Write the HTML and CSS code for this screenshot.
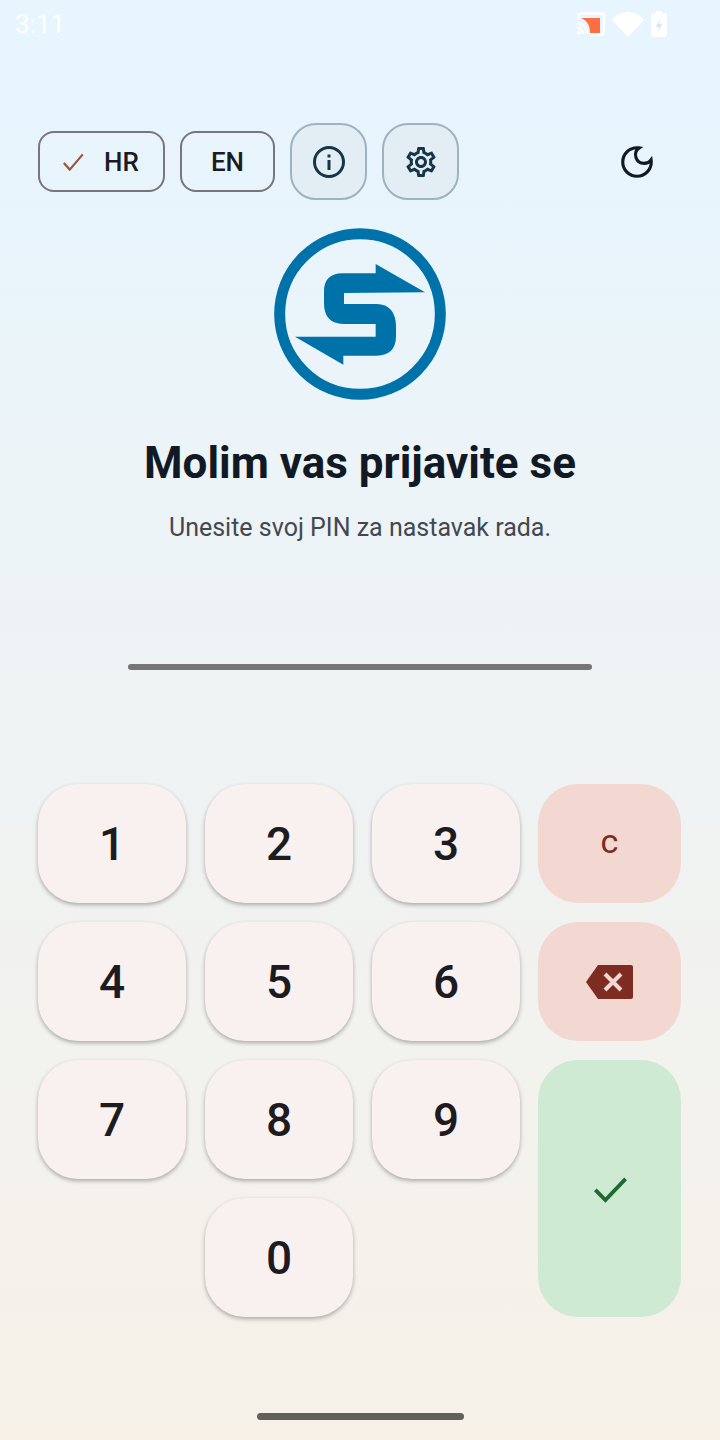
FILE: index.html
```html
<!DOCTYPE html>
<html lang="hr">
<head>
<meta charset="UTF-8" />
<meta name="viewport" content="width=device-width, initial-scale=1" />
<title>Prijava</title>
<link rel="stylesheet" href="styles.css">
</head>
<body>

<div class="statusbar">
  <span class="clock">3:11</span>
  <div class="statusicons">
    <svg width="29" height="24" viewBox="0 0 29 24">
      <path d="M3 7V3a1.500 1.500 0 0 1 1.500-1.500h22A1.500 1.500 0 0 1 28 3v18a1.500 1.500 0 0 1-1.500 1.500H15" fill="none" stroke="#fff" stroke-width="2.600"/>
      <path d="M5 6h19v15H14C14 13 11 8.500 5 6z" fill="#ff6e40"/>
      <path d="M1 11c6 0 10 5 10 11M1 15.500c3.500 0 6 3 6 6.500" fill="none" stroke="#fff" stroke-width="2.400"/>
      <circle cx="2.800" cy="20.500" r="2" fill="#fff"/>
    </svg>
    <svg width="32" height="25" viewBox="0 0 32 25"><path d="M0 8C4 3 10 0 16 0s12 3 16 8L16 25z" fill="#fff"/></svg>
    <svg width="16" height="26" viewBox="0 0 16 26">
      <path d="M5 0h6v2h3a2 2 0 0 1 2 2v20a2 2 0 0 1-2 2H2a2 2 0 0 1-2-2V4a2 2 0 0 1 2-2h3z" fill="#fff"/>
      <path d="M9 8l-4 8h3l-1 5 4-8H8z" fill="#cfe6f5"/>
    </svg>
  </div>
</div>

<div class="toolbar">
  <button class="chip chipHr">
    <svg width="26" height="26" viewBox="0 0 24 24"><path d="M3.500 13l5.500 6L21 5" fill="none" stroke="#9c5138" stroke-width="2"/></svg>
    HR
  </button>
  <button class="chip chipEn">EN</button>
  <button class="iconbtn">
    <svg width="34" height="34" viewBox="0 0 34 34">
      <circle cx="17" cy="17" r="14.500" fill="none" stroke="#153549" stroke-width="3"/>
      <rect x="15.500" y="15" width="3" height="10" fill="#153549"/>
      <rect x="15.500" y="9.500" width="3" height="3" fill="#153549"/>
    </svg>
  </button>
  <button class="iconbtn">
    <svg width="36" height="36" viewBox="0 0 24 24">
      <path d="M19.430 12.980c.04-.32.070-.64.070-.98s-.030-.66-.070-.98l2.110-1.650c.19-.15.240-.42.120-.64l-2-3.460c-.12-.22-.39-.3-.61-.22l-2.490 1c-.52-.4-1.080-.73-1.690-.98l-.38-2.650A.488.488 0 0 0 14 2h-4c-.25 0-.46.18-.49.42l-.38 2.650c-.61.25-1.170.59-1.690.98l-2.490-1c-.23-.09-.49 0-.61.22l-2 3.460c-.13.22-.07.49.12.64l2.110 1.650c-.04.32-.07.65-.07.98s.030.66.070.98l-2.110 1.650c-.19.15-.24.42-.12.64l2 3.460c.12.22.39.3.61.22l2.490-1c.52.4 1.080.73 1.690.98l.38 2.650c.03.24.24.42.49.42h4c.25 0 .46-.18.49-.42l.38-2.650c.61-.25 1.170-.59 1.690-.98l2.490 1c.23.09.49 0 .61-.22l2-3.460c.12-.22.070-.49-.12-.64l-2.110-1.650zM17.450 11.270c.04.31.050.52.050.73s-.020.43-.050.73l-.14 1.130.89.7 1.080.84-.7 1.210-1.270-.51-1.040-.42-.9.68c-.43.32-.84.56-1.250.73l-1.060.43-.16 1.130-.2 1.350h-1.400l-.19-1.350-.16-1.130-1.060-.43c-.43-.18-.83-.41-1.230-.71l-.91-.7-1.060.43-1.270.51-.7-1.210 1.080-.84.89-.7-.14-1.130c-.03-.31-.05-.54-.05-.74s.020-.43.050-.73l.14-1.130-.89-.7-1.080-.84.7-1.210 1.270.51 1.040.42.9-.68c.43-.32.84-.56 1.250-.73l1.060-.43.16-1.130.2-1.350h1.390l.19 1.350.16 1.130 1.060.43c.43.18.83.41 1.230.71l.91.7 1.060-.43 1.270-.51.7 1.210-1.070.85-.89.7.140 1.130zM12 8c-2.210 0-4 1.790-4 4s1.790 4 4 4 4-1.790 4-4-1.790-4-4-4zm0 6c-1.100 0-2-.9-2-2s.9-2 2-2 2 .9 2 2-.9 2-2 2z" fill="#153549"/>
    </svg>
  </button>
  <button class="moon">
    <svg width="38" height="38" viewBox="0 0 24 24">
      <path d="M12 3a9 9 0 1 0 9 9c0-.46-.04-.92-.1-1.360a5.390 5.390 0 0 1-4.400 2.260 5.400 5.400 0 0 1-3.140-9.800c-.44-.06-.9-.1-1.360-.1z" fill="none" stroke="#111a24" stroke-width="2"/>
    </svg>
  </button>
</div>

<div class="header">
  <svg class="logo" width="172" height="172" viewBox="42 22 516 516">
    <circle cx="300" cy="280" r="241" fill="none" stroke="#0072aa" stroke-width="33"/>
    <path d="M495 215 347 130v28H248C210 158 192 178 192 212v36c0 40 20 62 58 62h97v38H105l145 84v-27h100c38 0 58-20 58-58v-32c0-38-20-65-58-65h-98v-33z" fill="#0072aa"/>
  </svg>
  <h1>Molim vas prijavite se</h1>
  <p>Unesite svoj PIN za nastavak rada.</p>
</div>

<div class="pinline"></div>

<div class="keypad">
  <button class="key">1</button>
  <button class="key">2</button>
  <button class="key">3</button>
  <button class="side red clear">c</button>
  <button class="key">4</button>
  <button class="key">5</button>
  <button class="key">6</button>
  <button class="side red">
    <svg width="47" height="36" viewBox="0 0 47 36">
      <path d="M12 1h33a2 2 0 0 1 2 2v30a2 2 0 0 1-2 2H12L0 18z" fill="#7e2b22"/>
      <path d="M19 10l16 16M35 10L19 26" stroke="#f3d8d2" stroke-width="4"/>
    </svg>
  </button>
  <button class="key">7</button>
  <button class="key">8</button>
  <button class="key">9</button>
  <button class="side green">
    <svg width="44" height="44" viewBox="0 0 24 24"><path d="M4 12.500l5.500 5.500L20.500 6.500" fill="none" stroke="#1e6b2d" stroke-width="2.100"/></svg>
  </button>
  <button class="key zero">0</button>
</div>

<div class="homepill"></div>

</body>
</html>
```

FILE: styles.css
```css
* {
  box-sizing: border-box;
}
body {
  margin: 0;
  width: 720px;
  height: 1440px;
  overflow: hidden;
  display: flex;
  flex-direction: column;
  font-family: Roboto, sans-serif;
  background: linear-gradient(180deg, #e6f5ff 0%, #f7f1e8 100%);
  color: #1c1b1f;
}
button {
  font-family: inherit;
  cursor: pointer;
  padding: 0;
}

.statusbar {
  height: 48px;
  padding: 0 53px 0 15px;
  display: flex;
  justify-content: space-between;
  align-items: center;
}
.clock {
  color: #fff;
  font-size: 26px;
}
.statusicons {
  display: flex;
  align-items: center;
  gap: 7px;
}

.toolbar {
  margin-top: 75px;
  padding: 0 38px;
  height: 77px;
  display: flex;
  align-items: center;
}
.chip {
  height: 61px;
  background: transparent;
  border: 2px solid #79747e;
  border-radius: 16px;
  font-size: 26px;
  font-weight: 500;
  color: #1c1b1f;
  display: flex;
  align-items: center;
  justify-content: center;
}
.chipHr {
  width: 127px;
  gap: 18px;
  padding-right: 4px;
}
.chipEn {
  width: 95px;
  margin-left: 15px;
}
.iconbtn {
  width: 77px;
  height: 77px;
  margin-left: 15px;
  background: #e3eef4;
  border: 2px solid #9db3c2;
  border-radius: 26px;
  display: flex;
  align-items: center;
  justify-content: center;
}
.moon {
  margin-left: auto;
  margin-right: 26px;
  background: none;
  border: none;
  display: flex;
}

.header {
  margin-top: 28px;
  display: flex;
  flex-direction: column;
  align-items: center;
}
.logo {
  display: block;
}
.header h1 {
  margin: 34px 0 0;
  font-size: 44px;
  line-height: 58px;
  font-weight: 700;
  color: #111a24;
}
.header p {
  margin: 21px 0 0;
  font-size: 25px;
  line-height: 30px;
  color: #44474e;
}

.pinline {
  width: 464px;
  height: 6px;
  margin: 121px auto 0;
  border-radius: 3px;
  background: #787579;
}

.keypad {
  margin-top: 114px;
  padding: 0 38px;
  display: grid;
  grid-template-columns: 148px 148px 148px 142px;
  grid-template-rows: repeat(4, 119px);
  column-gap: 19px;
  row-gap: 19px;
}
.key {
  background: #f8f1f0;
  border: none;
  border-radius: 40px;
  font-size: 46px;
  font-weight: 500;
  color: #1c1b1f;
  box-shadow: 0 2px 4px rgba(0, 0, 0, 0.3);
}
.zero {
  grid-column: 2;
}
.side {
  border: none;
  border-radius: 40px;
  margin-left: -1px;
  display: flex;
  align-items: center;
  justify-content: center;
}
.red {
  background: #f3d8d2;
  color: #7e2b22;
}
.clear {
  font-size: 34px;
  padding-bottom: 6px;
}
.green {
  background: #ceead3;
  grid-column: 4;
  grid-row: 3 / 5;
}

.homepill {
  width: 207px;
  height: 7px;
  margin: 96px auto 0;
  border-radius: 4px;
  background: #625f5c;
}
```
